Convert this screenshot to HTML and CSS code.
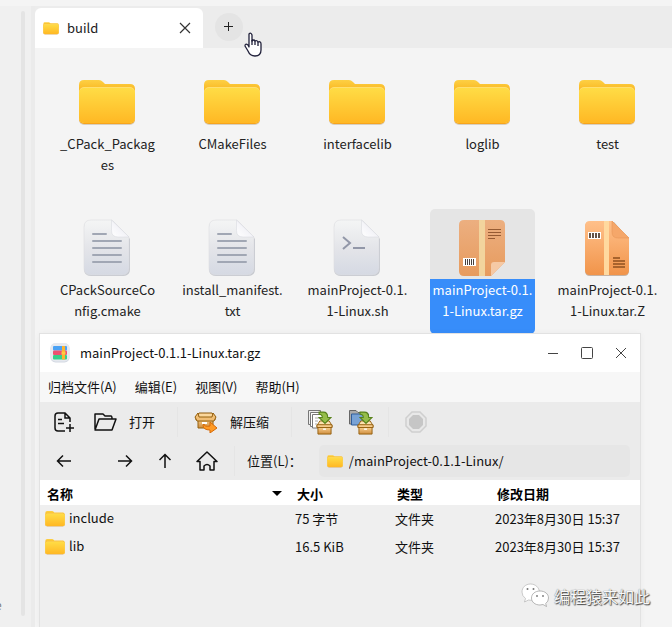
FILE: index.html
```html
<!DOCTYPE html>
<html lang="zh-CN">
<head>
<meta charset="utf-8">
<meta name="viewport" content="width=device-width, initial-scale=1">
<title>build</title>
<link rel="stylesheet" href="styles.css">
</head>
<body>
<svg class="defs" aria-hidden="true">
  <defs>
    <linearGradient id="gFolder" x1="0" y1="0" x2="0" y2="1"><stop offset="0" stop-color="#ffdc45"/><stop offset="1" stop-color="#ffb824"/></linearGradient>
    <linearGradient id="gBack" x1="0" y1="0" x2="0" y2="1"><stop offset="0" stop-color="#fdd044"/><stop offset=".6" stop-color="#f9b21b"/></linearGradient>
    <linearGradient id="gDoc" x1="0" y1="0" x2="0" y2="1"><stop offset="0" stop-color="#f4f5f5"/><stop offset=".5" stop-color="#e4e5e9"/><stop offset="1" stop-color="#d5d9e3"/></linearGradient>
    <linearGradient id="gFold" x1="0" y1="1" x2="1" y2="0"><stop offset="0" stop-color="#fff"/><stop offset="1" stop-color="#e7e7f0"/></linearGradient>
    <linearGradient id="gBox" x1="0" y1="0" x2="0" y2="1"><stop offset="0" stop-color="#ffc08a"/><stop offset="1" stop-color="#f1944a"/></linearGradient>
    <linearGradient id="gBoxSel" x1="0" y1="0" x2="0" y2="1"><stop offset="0" stop-color="#ecaf80"/><stop offset="1" stop-color="#e79b5e"/></linearGradient>
    <linearGradient id="gWood" x1="0" y1="0" x2="0" y2="1"><stop offset="0" stop-color="#f8cf91"/><stop offset="1" stop-color="#cf8d3c"/></linearGradient>
  </defs>
  <symbol id="folder" viewBox="0 0 58 48">
    <path d="M1 6q0-5 5-5h15q2 0 4 2l2 2h25q5 0 5 5v12H1z" fill="url(#gBack)"/>
    <rect x="1" y="9" width="56" height="37" rx="5" fill="#b9a98c" opacity=".5"/>
    <rect x="1" y="8" width="56" height="37" rx="5" fill="#f8a51b"/>
    <rect x="1" y="8" width="56" height="36" rx="5" fill="#ffdf70"/>
    <rect x="1" y="9" width="56" height="35" rx="5" fill="url(#gFolder)"/>
  </symbol>
  <symbol id="doc" viewBox="0 0 48 58">
    <path d="M8 2h22l17 18v30q0 7-7 7H8q-7 0-7-7V9q0-7 7-7z" fill="#c3c6cd"/>
    <path d="M8 1h21l17 17v31q0 7-7 7H8q-7 0-7-7V8q0-7 7-7z" fill="url(#gDoc)" stroke="#dedee0" stroke-width=".6"/>
    <path d="M28.500 1 46 18H35q-6.500 0-6.500-6.500z" fill="url(#gFold)" stroke="#d5d6dc" stroke-width=".5"/>
  </symbol>
  <symbol id="textdoc" viewBox="0 0 48 58">
    <use href="#doc"/>
    <path d="M10 15h13M10 22h28M10 29h28M10 36h28M10 43h28" stroke="#a1a7b4" stroke-width="2" stroke-linecap="round"/>
  </symbol>
  <symbol id="openbox" viewBox="0 0 18 16">
    <path d="M4 1h10l3 5v2H1V6z" fill="#fbe0af" stroke="#94600f"/>
    <path d="M2 8h14v7H2z" fill="url(#gWood)" stroke="#94600f"/>
    <path d="M1 5h16v3H1z" fill="#f6cb8c" stroke="#94600f"/>
    <path d="M7.500 9h3v1.500h-3z" fill="#fff"/>
  </symbol>
  <symbol id="downarrow" viewBox="0 0 13 12">
    <path d="M1 1h4q4 0 4 5h3l-5.500 5.500L1 6h3q0-3-3-3z" fill="#95bd49" stroke="#58821b"/>
  </symbol>
</svg>

<div class="desktop">
  <aside class="sidebar"><span class="clipped">e</span><div class="scrollbar"></div></aside>
  <main class="files">
    <nav class="tabs">
      <div class="tab">
        <svg class="folder-small"><use href="#folder"/></svg>
        <span class="tab-name">build</span>
        <button class="tab-close" aria-label="关闭标签"><svg width="12" height="12" viewBox="0 0 12 12"><path d="m1 1 10 10M11 1 1 11" stroke="#333" stroke-width="1.200"/></svg></button>
      </div>
      <div class="tab-rest">
        <button class="tab-add" aria-label="新标签"><svg width="10" height="10" viewBox="0 0 10 10"><path d="M4.500 0v9M0 4.500h9" stroke="#222"/></svg></button>
      </div>
    </nav>
    <div class="grid">
      <a class="item" href="#"><span class="thumb"><svg class="folder-icon"><use href="#folder"/></svg></span><span class="label">_CPack_Packag<br>es</span></a>
      <a class="item" href="#"><span class="thumb"><svg class="folder-icon"><use href="#folder"/></svg></span><span class="label">CMakeFiles</span></a>
      <a class="item" href="#"><span class="thumb"><svg class="folder-icon"><use href="#folder"/></svg></span><span class="label">interfacelib</span></a>
      <a class="item" href="#"><span class="thumb"><svg class="folder-icon"><use href="#folder"/></svg></span><span class="label">loglib</span></a>
      <a class="item" href="#"><span class="thumb"><svg class="folder-icon"><use href="#folder"/></svg></span><span class="label">test</span></a>
      <a class="item" href="#"><span class="thumb"><svg class="doc-icon"><use href="#textdoc"/></svg></span><span class="label">CPackSourceCo<br>nfig.cmake</span></a>
      <a class="item" href="#"><span class="thumb"><svg class="doc-icon"><use href="#textdoc"/></svg></span><span class="label">install_manifest.<br>txt</span></a>
      <a class="item" href="#"><span class="thumb"><svg class="doc-icon" viewBox="0 0 48 58"><use href="#doc"/><path d="m10 18 7 6-7 6" fill="none" stroke="#9297a8" stroke-width="2"/><path d="M20 29h12" stroke="#9297a8" stroke-width="2"/></svg></span><span class="label">mainProject-0.1.<br>1-Linux.sh</span></a>
      <a class="item selected" href="#"><span class="thumb"><svg class="doc-icon" viewBox="0 0 48 58">
        <path d="M6 1h36q5 0 5 5v37L33 57H6q-5 0-5-5V6q0-5 5-5z" fill="url(#gBoxSel)"/>
        <path d="M21 1h6v56h-6z" fill="#f2d49d"/>
        <path d="M33 57V46q0-3 3-3h11z" fill="#f5c9a5"/>
        <path d="M30 10.500h13M30 13.500h13M30 16.500h13M30 19.500h7" stroke="#965b33"/>
        <path d="M5 39h13v8H5z" fill="#fff"/><path d="M7.500 40v6M9.500 40v6M11.500 40v6M13.500 40v6M15.500 40v6" stroke="#474140"/>
      </svg></span><span class="label">mainProject-0.1.<br>1-Linux.tar.gz</span></a>
      <a class="item" href="#"><span class="thumb"><svg class="doc-icon" viewBox="0 0 48 58">
        <path d="M7 3h24l15 17v32q0 5-5 5H7q-5 0-5-5V8q0-5 5-5z" fill="#c5b3a5"/>
        <path d="M7 2h22l17 17v32q0 5-5 5H7q-5 0-5-5V7q0-5 5-5z" fill="url(#gBox)"/>
        <path d="M21 2h5v54h-5z" fill="#ffd99f"/>
        <path d="M29 2 46 19H35q-6 0-6-6z" fill="#f5a76a" stroke="#e59558" stroke-width=".6"/>
        <path d="M5 13h13v7H5z" fill="#fff"/><path d="M7 14v5M10 14v5M13 14v5M16 14v5" stroke="#655346" stroke-width="2"/>
        <path d="M30 39h7M30 42h12M30 45h12M30 48h12" stroke="#a8632d" stroke-width="2"/>
      </svg></span><span class="label">mainProject-0.1.<br>1-Linux.tar.Z</span></a>
    </div>
  </main>

  <section class="window">
    <header class="titlebar">
      <svg width="20" height="20" viewBox="0 0 20 20"><rect x=".5" y=".5" width="19" height="19" rx="5" fill="#d3d8e2"/><rect x=".5" y="0" width="19" height="18.500" rx="5" fill="#e6e9ef"/><rect x="3" y="3" width="14" height="4.500" rx="1" fill="#4ba2f4"/><rect x="3" y="7.500" width="14" height="4.500" rx="1" fill="#ee5071"/><rect x="3" y="12" width="14" height="4.500" rx="1" fill="#36ce8b"/><path d="M12 3h3v13.500h-3z" fill="#ffb52f"/><path d="M11.500 8.500h4v3h-4z" fill="#ffcd42"/></svg>
      <h1>mainProject-0.1.1-Linux.tar.gz</h1>
      <div class="controls">
        <button aria-label="最小化"><svg width="14" height="14" viewBox="0 0 14 14"><path d="M2 7.500h10" stroke="#444"/></svg></button>
        <button aria-label="最大化"><svg width="14" height="14" viewBox="0 0 14 14"><rect x="1.500" y="1.500" width="11" height="11" rx="1" stroke="#444" fill="none"/></svg></button>
        <button aria-label="关闭"><svg width="14" height="14" viewBox="0 0 14 14"><path d="m2 2 10 10M12 2 2 12" stroke="#444"/></svg></button>
      </div>
    </header>
    <nav class="menu"><button>归档文件(A)</button><button>编辑(E)</button><button>视图(V)</button><button>帮助(H)</button></nav>
    <div class="toolbar">
      <button class="new" aria-label="新建"><svg width="22" height="22" viewBox="0 0 22 22" fill="none" stroke="#111" stroke-width="1.500"><path d="M17 11V7l-5-5H5Q2 2 2 5v12q0 3 3 3h7M12 2v5h5M5 8.500h4M5 12.500h6M17 13v8M13 17h8"/></svg></button>
      <button class="open"><svg width="24" height="20" viewBox="0 0 24 20" fill="none" stroke="#111" stroke-width="1.500" stroke-linejoin="round"><path d="M2 17V2h8l2 2h6q1 0 1 3M2 18 6 7h17l-4 11z"/></svg><span>打开</span></button>
      <i class="divider"></i>
      <button class="extract"><svg width="24" height="22" viewBox="0 0 24 22"><path d="M5 2h13l3 4v3H2V6z" fill="#fbd79c" stroke="#8d590b"/><path d="M4 8h15v9H4z" fill="url(#gWood)" stroke="#94600f"/><path d="M4 2 1 6l2 4h17l2-4-3-4-1 4H5z" fill="#f1be75" stroke="#94600f"/><path d="M8 11h5v2H8z" fill="#fff"/><path d="M10 13q0 3 6 2v-4l7 6-7 5v-3q-7 0-7-5z" fill="#ff9b25" stroke="#d66908"/></svg><span>解压缩</span></button>
      <i class="divider"></i>
      <button class="add" aria-label="添加文件"><svg width="26" height="26" viewBox="0 0 26 26"><path d="M1.500 1.500h12v14h-12z" fill="#eee" stroke="#777"/><path d="M3.500 3.500h12v14h-12z" fill="#fff" stroke="#777"/><path d="M5.500 5.500h12V19h-12z" fill="#fff" stroke="#777"/><path d="M8 9h5M8 12h3M8 15h2" stroke="#aaa"/><use href="#openbox" x="9" y="11" width="17" height="15"/><use href="#downarrow" x="11" y="2" width="14" height="13"/></svg></button>
      <button class="add" aria-label="添加文件夹"><svg width="26" height="26" viewBox="0 0 26 26"><path d="M1.500 15V1.500H8l2 2h9V15z" fill="#aaa" stroke="#666"/><path d="M3.500 5h17v11h-17z" fill="#78a2d5" stroke="#315e9b"/><use href="#openbox" x="9" y="11" width="17" height="15"/><use href="#downarrow" x="11" y="2" width="14" height="13"/></svg></button>
      <i class="divider"></i>
      <button class="stop" aria-label="停止" disabled><svg width="22" height="22" viewBox="0 0 22 22"><path d="M7 1h8l6 6v8l-6 6H7l-6-6V7z" fill="#e8e8e8" stroke="#cfcfcf" stroke-width="1.500"/><path d="M8 4h6l4 4v6l-4 4H8l-4-4V8z" fill="#c6c6c6"/></svg></button>
    </div>
    <div class="location">
      <button class="back" aria-label="后退"><svg width="16" height="14" viewBox="0 0 16 14"><path d="M15 7H1.500M7 1.500 1.500 7 7 12.500" fill="none" stroke="#111" stroke-width="1.500"/></svg></button>
      <button class="forward" aria-label="前进"><svg width="16" height="14" viewBox="0 0 16 14"><path d="M1 7h13.500M9 1.500 14.500 7 9 12.500" fill="none" stroke="#111" stroke-width="1.500"/></svg></button>
      <button class="up" aria-label="上层"><svg width="14" height="16" viewBox="0 0 14 16"><path d="M7 15V1.500M1.500 7 7 1.500 12.500 7" fill="none" stroke="#111" stroke-width="1.500"/></svg></button>
      <button class="home" aria-label="主目录"><svg width="22" height="22" viewBox="0 0 22 22"><path d="m11 2 10 9.500h-3V20h-4v-4q-3-3-6 0v4H4v-8.500H1z" fill="none" stroke="#111" stroke-width="1.500" stroke-linejoin="round"/></svg></button>
      <i class="divider"></i>
      <label for="path">位置(L)：</label>
      <div class="path"><svg class="folder-small"><use href="#folder"/></svg><input id="path" value="/mainProject-0.1.1-Linux/"></div>
    </div>
    <table>
      <thead><tr><th class="name"><span>名称</span><svg width="10" height="5" viewBox="0 0 10 5"><path d="M0 0h10L5 5z"/></svg></th><th class="size">大小</th><th class="size">类型</th><th>修改日期</th></tr></thead>
      <tbody>
        <tr><td class="name"><svg class="row-folder"><use href="#folder"/></svg><span>include</span></td><td>75 字节</td><td>文件夹</td><td>2023年8月30日 15:37</td></tr>
        <tr><td class="name"><svg class="row-folder"><use href="#folder"/></svg><span>lib</span></td><td>16.5 KiB</td><td>文件夹</td><td>2023年8月30日 15:37</td></tr>
      </tbody>
    </table>
  </section>

  <svg class="pointer" width="20" height="26" viewBox="0 0 20 26"><path d="M6 2q2-2 3 1v6q2-2 3 0 2-1 3 1 3-1 3 2v6q0 6-6 6-5 0-7-5l-3-5q0-3 3-1l1 2z" fill="#fff" stroke="#20203a" stroke-width="1.300" stroke-linejoin="round"/><path d="M9 8v5M12 9v4M15 10v4" stroke="#20203a" stroke-width="1.300"/></svg>
  <div class="watermark">
    <svg width="28" height="25" viewBox="0 0 28 25"><path d="M9.500 1C4.500 1 1 4.500 1 9q0 4 3.500 6.500L3.500 19l4-2q2 .5 4 0l7-8C18 4.500 14.500 1 9.500 1z" fill="#fff" stroke="#aaa" stroke-width=".6"/><path d="M19 8c-5 0-8.500 3-8.500 7s3.500 7 8.500 7l3-.5 3.500 2-.8-3q2.800-2 2.800-5.500c0-4-3.500-7-8.500-7z" fill="#fff" stroke="#999" stroke-width=".7"/><g fill="#777"><circle cx="6.500" cy="6" r="1"/><circle cx="12.500" cy="6" r="1"/><circle cx="16" cy="13" r=".9"/><circle cx="22" cy="13" r=".9"/></g></svg>
    <span>编程猿来如此</span>
  </div>
</div>
</body>
</html>
```
FILE: styles.css
```css
* { box-sizing: border-box; }
body {
  margin: 0;
  font: 13px/19px "Noto Sans CJK SC", "Noto Sans", sans-serif;
  color: #222;
  background: #f4f4f4;
}
svg { display: block; flex: none; }
button { border: 0; padding: 0; background: none; font: inherit; color: inherit; display: flex; align-items: center; flex: none; }
a { color: inherit; text-decoration: none; }
.defs { position: absolute; width: 0; height: 0; }
.desktop { position: relative; display: flex; min-height: 100vh; padding-top: 6px; overflow: hidden; }
.sidebar { position: relative; display: flex; justify-content: flex-end; width: 35px; padding: 5px 6px 11px 0; background: #f0f0f0; border-right: 4px solid #ebebeb; }
.scrollbar { width: 4px; border-radius: 2px; background: #e4e4e4; }
.clipped { position: absolute; left: -5px; bottom: 13px; font-size: 12px; color: #777; }
.files { flex: 1; min-width: 0; }
.tabs { display: flex; height: 42px; background: #ececec; }
.tab { display: flex; align-items: center; width: 168px; margin-top: 2px; padding: 0 12px 0 8px; background: #fff; border-radius: 6px 6px 0 0; }
.folder-small { width: 16px; height: 13px; }
.tab-name { flex: 1; margin-left: 8px; padding-bottom: 2px; }
.tab-rest { flex: 1; padding: 7px 12px; }
.tab-add { width: 28px; height: 28px; justify-content: center; border-radius: 14px; background: #e4e4e4; }
.grid { display: grid; grid-template-columns: repeat(5, 105px); gap: 21px 20px; padding: 15px 0 0 20px; }
.item { display: flex; flex-direction: column; height: 125px; border-radius: 5px; overflow: hidden; }
.thumb { display: flex; align-items: center; justify-content: center; height: 70px; padding: 9px 2px 0 0; }
.folder-icon { width: 58px; height: 48px; }
.doc-icon { width: 48px; height: 58px; margin-bottom: 2px; }
.label { flex: 1; line-height: 21px; text-align: center; white-space: nowrap; }
.selected { background: #e5e5e5; }
.selected .label { background: #378dfa; color: #fff; }
.window { position: absolute; top: 333px; left: 39px; right: 31px; bottom: 0; background: #efefef; border: 1px solid #e2e2e2; border-bottom: 0; color: #111; box-shadow: 0 0 6px #0000000a; }
.titlebar { display: flex; align-items: center; height: 38px; padding: 0 12px 0 10px; background: #fff; }
h1 { flex: 1; margin: 0 0 0 10px; padding-bottom: 2px; font: inherit; }
.controls { display: flex; gap: 20px; }
.menu { display: flex; align-items: center; gap: 18px; height: 30px; padding: 0 0 2px 8px; background: #f7f7f7; }
.toolbar, .location { display: flex; align-items: center; background: #ebebeb; height: 40px; }
.location { height: 38px; }
.toolbar { padding-left: 13px; }
.toolbar span, label { padding-bottom: 2px; }
.open { margin-left: 18px; gap: 12px; }
.divider { width: 1px; height: 30px; background: #e5e5e5; }
.open + .divider { margin-left: 22px; }
.extract { margin-left: 16px; gap: 12px; }
.extract + .divider { margin-left: 22px; }
.add { margin-left: 15px; }
.add + .divider { margin-left: 14px; }
.stop { margin-left: 16px; }
.location { padding: 0 10px 0 16px; }
.forward { margin-left: 45px; }
.up { margin-left: 25px; }
.home { margin-left: 24px; }
.location .divider { margin: 0 12px 0 16px; }
.path { display: flex; align-items: center; flex: 1; height: 32px; margin-left: 17px; padding-left: 8px; background: #e6e6e6; border-radius: 5px; }
.path input { flex: 1; min-width: 0; border: 0; padding: 0 0 2px; margin-left: 6px; background: none; font: inherit; color: inherit; outline: 0; }
table { width: 100%; table-layout: fixed; border-collapse: collapse; }
th { height: 25px; padding: 2px 7px 0; text-align: left; font-weight: 700; color: #000; background: #fff; }
td { height: 28px; padding: 0 5px 2px; white-space: nowrap; }
th.name { width: 250px; }
th.size { width: 100px; }
th.name span { float: left; }
th.name svg { float: right; margin: 7px 1px 0 0; }
td.name svg { float: left; width: 20px; height: 18px; margin-top: 2px; }
td.name span { margin-left: 4px; }
.pointer { position: absolute; left: 243px; top: 32px; }
.watermark { position: absolute; right: 22px; bottom: 19px; display: flex; align-items: center; gap: 5px; font-size: 16px; line-height: 24px; color: #f8f8f8; text-shadow: 1px 1px 1px #444, 0 0 1px #555; }
```
